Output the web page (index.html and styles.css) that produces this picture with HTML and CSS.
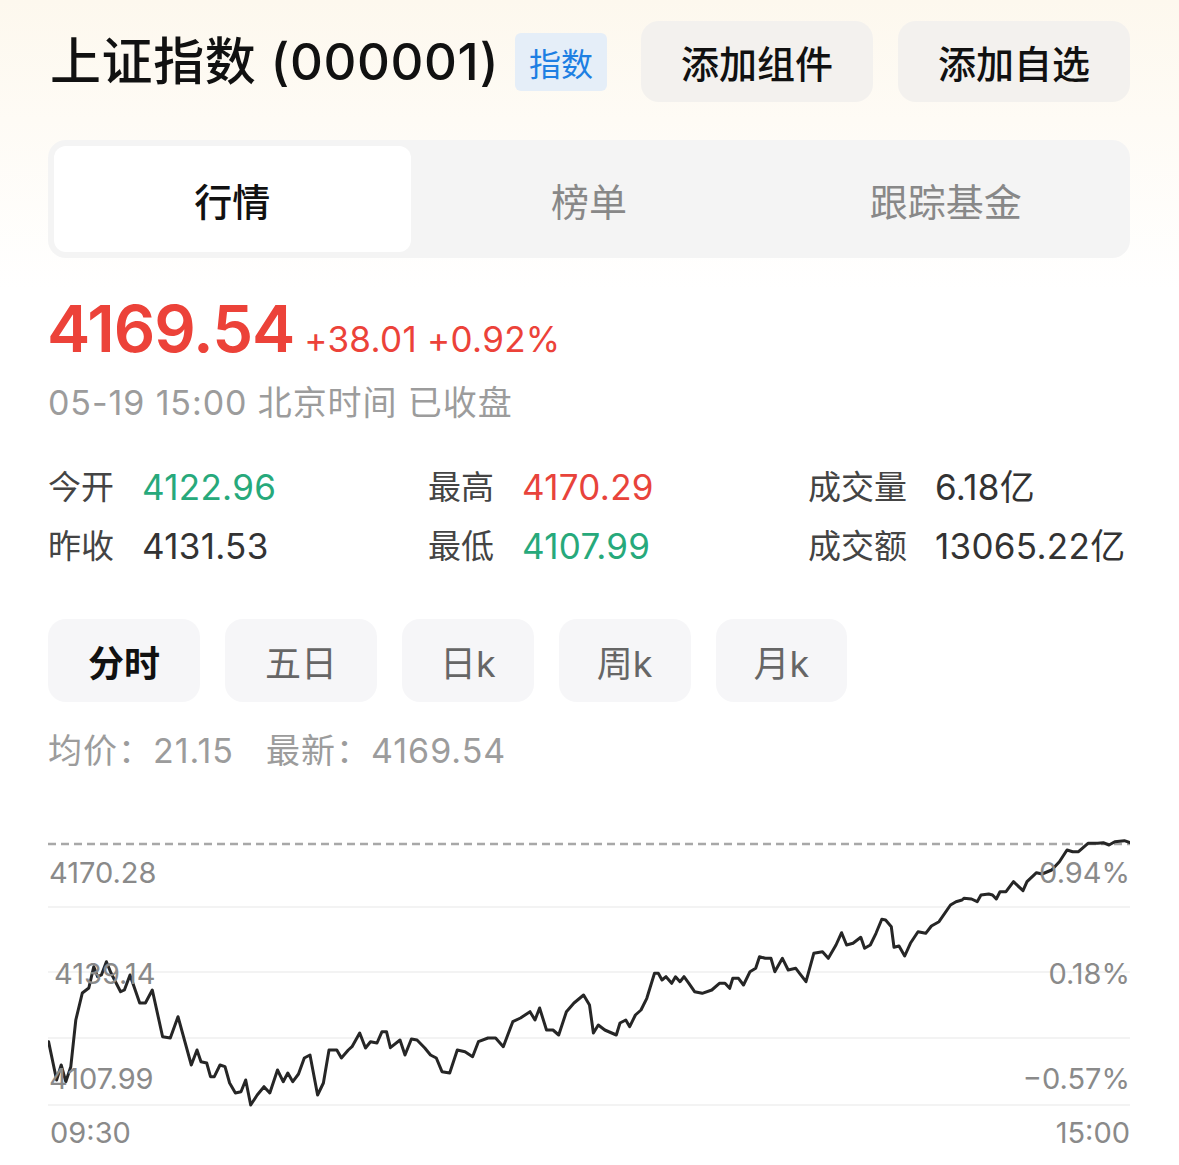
FILE: index.html
```html
<!DOCTYPE html>
<html lang="zh-CN">
<head>
<meta charset="utf-8">
<title>上证指数 (000001)</title>
<link rel="stylesheet" href="styles.css">
</head>
<body>
<div class="page">
  <header class="header">
    <h1 class="title">上证指数 (000001)</h1>
    <span class="badge">指数</span>
    <div class="actions">
      <button class="action">添加组件</button>
      <button class="action">添加自选</button>
    </div>
  </header>

  <nav class="tabs">
    <div class="tab active">行情</div>
    <div class="tab">榜单</div>
    <div class="tab">跟踪基金</div>
  </nav>

  <div class="price-row">
    <span class="price">4169.54</span>
    <span class="change">+38.01 +0.92%</span>
  </div>
  <div class="time-line">05-19 15:00 北京时间 已收盘</div>

  <div class="stats">
    <div class="stat"><span class="label">今开</span><span class="val green">4122.96</span></div>
    <div class="stat"><span class="label">最高</span><span class="val red">4170.29</span></div>
    <div class="stat"><span class="label">成交量</span><span class="val">6.18亿</span></div>
    <div class="stat"><span class="label">昨收</span><span class="val">4131.53</span></div>
    <div class="stat"><span class="label">最低</span><span class="val green">4107.99</span></div>
    <div class="stat"><span class="label">成交额</span><span class="val">13065.22亿</span></div>
  </div>

  <div class="periods">
    <button class="period active">分时</button>
    <button class="period">五日</button>
    <button class="period short">日k</button>
    <button class="period short">周k</button>
    <button class="period short">月k</button>
  </div>

  <div class="avg-line">
    <span>均价：21.15</span>
    <span>最新：4169.54</span>
  </div>

  <div class="chart">
    <svg class="chart-svg" width="1082" height="280" viewBox="0 0 1082 280">
      <line x1="0" y1="12" x2="1082" y2="12" class="dash"/>
      <line x1="0" y1="75" x2="1082" y2="75" class="grid"/>
      <line x1="0" y1="140" x2="1082" y2="140" class="grid"/>
      <line x1="0" y1="206" x2="1082" y2="206" class="grid"/>
      <line x1="0" y1="273" x2="1082" y2="273" class="grid"/>
      <polyline class="price-line" points="0.6,209.7 8.6,248 13.2,233 17.8,249.7 22.8,234.7 27.8,188 34.3,161 40.8,156 45.8,134.7 49.6,144.7 53.4,143 58.4,129.7 63,141 72.6,159.7 76.4,158 82,143 91.7,171 97.4,171 104.3,158 114.6,204.7 122.3,206 130,184.7 143.3,233 149,218 153,229.7 158.7,231 162.5,244.7 166.3,244.7 172,233 177,234.7 181.6,251 187.4,261 193,259.7 197.7,248 202.7,273 209.2,263 216,254.7 221.8,261 229.5,238 235.2,249.7 239.8,241 244.8,249.7 250.5,242 256.3,226 262,223 269.6,263 275.4,251 281,218 288.8,218 293.4,226 300.3,218 304,214.7 311.7,201 317.5,216 322.5,209.7 329,211 334,199.7 338.5,199.7 342.4,215.7 352,208 357,223 363.4,207 369,208 376.8,216 382.5,223 388.3,226 394,239.7 401.7,241 409.3,218 417,219.7 424.6,224.7 430.4,209.7 440,206 447.6,206 455.3,214.7 464.8,189.7 472.5,186 482,179.7 487,188 491.6,176 498.5,198 505,198 510.7,203 518.4,179.7 526,171 535.6,163 541.5,173 545.4,201 550.3,193 556.8,198 568.3,203 572,191 577.8,188 581.7,194.7 587.4,183 593,178 598.8,166.3 606.5,141.3 610.3,141.3 614,148 618,144.7 623.7,151.3 627.5,144.7 632,149.7 636,144.7 640.9,151.3 646.6,159.7 654.2,161.3 663.8,158 671.4,151.3 677,151.3 681.7,156.3 684.8,146.3 690.5,146.3 695.5,153 702,139.7 707.7,136.3 711.5,124.7 717.3,126.3 723,126.3 726.8,139.7 734.4,126.3 740.2,138 747.8,136.3 751.6,141.3 758,149.7 765.8,121.3 774.5,119.7 780.3,126.3 788,113 793.6,100.7 798.6,113 805,111.3 812.8,105.3 816.6,116.3 822.3,113 828,101.3 833.8,87.3 837.6,88 843.3,94.7 846,115.3 851,114 856.7,124 862.4,111.3 870,99.7 877.7,101.3 883.4,94 891,89.7 902.5,73 908,69.7 914,68 915.9,66.3 923.5,67 929.2,69.7 933,63 940.7,62 944.5,63 948.3,67 952,59.7 958,59.7 965.5,49.7 975,58.7 979,49.7 988.5,40.7 994,42 1003.7,38 1011.4,29.7 1019,18 1024.7,19.7 1030.5,19.7 1040,11.3 1049.6,11.3 1055.3,10.7 1061,13 1066.8,9.7 1076.3,8.7 1082,10.7"/>
    </svg>
    <span class="axis left l1">4170.28</span>
    <span class="axis right l1">0.94%</span>
    <span class="axis left l2">4139.14</span>
    <span class="axis right l2">0.18%</span>
    <span class="axis left l3">4107.99</span>
    <span class="axis right l3">−0.57%</span>
  </div>
  <div class="time-axis">
    <span>09:30</span>
    <span>15:00</span>
  </div>
</div>
</body>
</html>
```

FILE: styles.css
```css
* { box-sizing: border-box; }

html, body { margin: 0; }

body {
  width: 1179px;
  min-height: 1165px;
  background: linear-gradient(180deg, #fdf8ee 0px, #fefbf5 120px, #ffffff 290px);
  font-family: "Inter", "Noto Sans CJK SC", sans-serif;
  color: #111;
  overflow: hidden;
}

.page {
  padding: 21px 49px 0 48px;
}

/* header */
.header {
  display: flex;
  align-items: center;
  height: 81px;
}

.title {
  margin: 0 0 0 2px;
  font-size: 51px;
  font-weight: 500;
  letter-spacing: 0.6px;
  line-height: 1;
  color: #111;
}

.badge {
  margin-left: 16px;
  height: 58px;
  padding: 0 14px;
  display: flex;
  align-items: center;
  background: #e5eef8;
  color: #1d7fe3;
  font-size: 32px;
  border-radius: 6px;
}

.actions {
  margin-left: auto;
  display: flex;
  gap: 25px;
}

.action {
  height: 81px;
  width: 232px;
  border: none;
  border-radius: 18px;
  background: #f3f1ee;
  font-family: inherit;
  font-size: 38px;
  font-weight: 500;
  color: #111;
  padding: 0;
}

/* tabs */
.tabs {
  margin-top: 38px;
  height: 118px;
  padding: 6px;
  display: grid;
  grid-template-columns: repeat(3, 1fr);
  background: #f4f4f4;
  border-radius: 18px;
}

.tab {
  display: flex;
  align-items: center;
  justify-content: center;
  font-size: 38px;
  color: #888;
  border-radius: 12px;
}

.tab.active {
  background: #fff;
  color: #111;
  font-weight: 500;
}

/* price */
.price-row {
  margin-top: 31px;
  display: flex;
  align-items: baseline;
  gap: 10px;
  height: 80px;
  line-height: 80px;
  color: #ec4239;
}

.price {
  font-size: 65px;
  font-weight: 600;
  letter-spacing: -1px;
  margin-left: -1px;
}

.change {
  font-size: 35px;
  letter-spacing: 0.3px;
}

.time-line {
  margin-top: 12px;
  height: 44px;
  line-height: 44px;
  font-size: 34px;
  letter-spacing: 0.9px;
  color: #9c9c9c;
}

/* stats */
.stats {
  margin-top: 40px;
  display: grid;
  grid-template-columns: 380px 380px 1fr;
  row-gap: 15px;
}

.stat {
  display: flex;
  gap: 28px;
  height: 44px;
  line-height: 44px;
}

.label {
  font-size: 33px;
  color: #444;
}

.val {
  font-size: 35px;
  letter-spacing: 0.3px;
  color: #333;
}

.green { color: #27a97b; }
.red { color: #e8433b; }

/* periods */
.periods {
  margin-top: 51px;
  display: flex;
  gap: 25px;
}

.period {
  height: 83px;
  padding: 0 40px;
  border: none;
  border-radius: 18px;
  background: #f6f6f8;
  font-family: inherit;
  font-size: 36px;
  color: #666;
}

.period.short {
  padding: 0 38px;
}

.period.active {
  color: #111;
  font-weight: 600;
}

.avg-line {
  margin-top: 27px;
  height: 44px;
  line-height: 44px;
  font-size: 34px;
  letter-spacing: 1px;
  color: #9c9c9c;
  display: flex;
  gap: 32px;
}

/* chart */
.chart {
  position: relative;
  margin-top: 59px;
  height: 280px;
}

.chart-svg {
  display: block;
}

.dash {
  stroke: #a8a8a8;
  stroke-width: 2.5;
  stroke-dasharray: 8 5;
}

.grid {
  stroke: #efefef;
  stroke-width: 1.5;
}

.price-line {
  fill: none;
  stroke: #262626;
  stroke-width: 3;
  stroke-linejoin: round;
  stroke-linecap: round;
}

.axis {
  position: absolute;
  font-size: 29px;
  line-height: 32px;
  color: #8a8a8a;
}

.axis.left { left: 1px; }
.axis.right { right: 0; }
.l1 { top: 25px; }
.l2 { top: 126px; }
.l2.left { left: 6px; }
.l3 { top: 231px; }

.time-axis {
  margin-top: 3px;
  display: flex;
  justify-content: space-between;
  font-size: 29px;
  line-height: 36px;
  color: #8a8a8a;
  padding-left: 2px;
}
```
